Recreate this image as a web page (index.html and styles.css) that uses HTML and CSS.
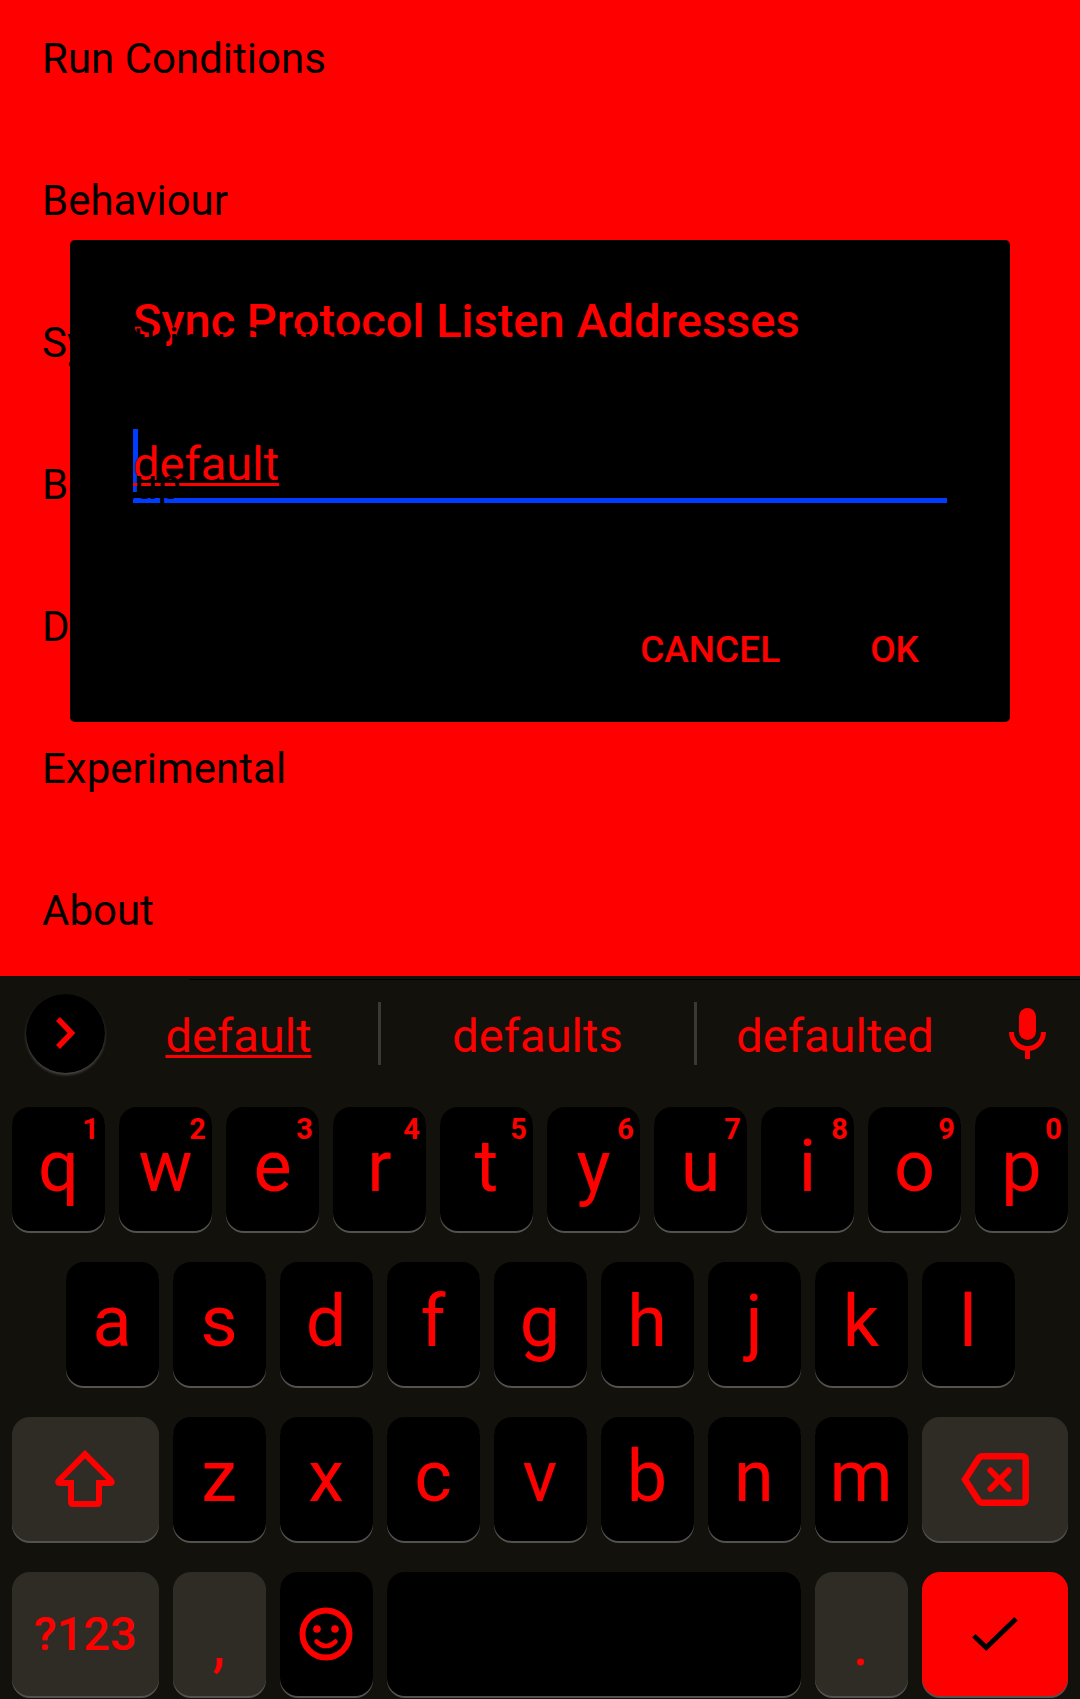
FILE: index.html
```html
<!DOCTYPE html>
<html lang="en">
<head>
<meta charset="utf-8">
<meta name="viewport" content="width=device-width, initial-scale=1">
<title>Settings</title>
<link rel="stylesheet" href="styles.css">
</head>
<body>
<main class="settings">
  <ul class="settings-list">
    <li>Run Conditions</li>
    <li>Behaviour</li>
    <li>Syncthing Options</li>
    <li>Backup</li>
    <li>Debug</li>
    <li>Experimental</li>
    <li>About</li>
  </ul>
  <form class="dialog" role="dialog" aria-labelledby="dialog-title">
    <label class="dialog-title" id="dialog-title" for="addresses">Sync Protocol Listen Addresses</label>
    <div class="field">
      <input class="field-input" id="addresses" type="text" value="default" spellcheck="false">
      <span class="caret"></span>
    </div>
    <div class="dialog-actions">
      <button class="action" type="button">CANCEL</button>
      <button class="action" type="button">OK</button>
    </div>
  </form>
</main>

<section class="keyboard" aria-label="Keyboard">
  <div class="suggestions">
    <button class="expand" type="button" aria-label="More">
      <svg width="20" height="32" viewBox="0 0 20 32"><path d="M2 2 15.5 16 2 30" fill="none" stroke="currentColor" stroke-width="5.5"/></svg>
    </button>
    <button class="word word-current" type="button"><span>default</span></button>
    <button class="word" type="button">defaults</button>
    <button class="word word-last" type="button">defaulted</button>
    <button class="mic" type="button" aria-label="Voice input">
      <svg width="37" height="51" viewBox="0 0 37 51"><rect x="10" y="0" width="17" height="32" rx="8.5" fill="currentColor"/><path d="M2.5 24a16 16.500 0 0 0 32 0M18.500 40v11" fill="none" stroke="currentColor" stroke-width="5"/></svg>
    </button>
  </div>
  <div class="keys">
    <button class="key" type="button">q<span class="hint">1</span></button>
    <button class="key" type="button">w<span class="hint">2</span></button>
    <button class="key" type="button">e<span class="hint">3</span></button>
    <button class="key" type="button">r<span class="hint">4</span></button>
    <button class="key" type="button">t<span class="hint">5</span></button>
    <button class="key" type="button">y<span class="hint">6</span></button>
    <button class="key" type="button">u<span class="hint">7</span></button>
    <button class="key" type="button">i<span class="hint">8</span></button>
    <button class="key" type="button">o<span class="hint">9</span></button>
    <button class="key" type="button">p<span class="hint">0</span></button>

    <button class="key key-indent" type="button">a</button>
    <button class="key" type="button">s</button>
    <button class="key" type="button">d</button>
    <button class="key" type="button">f</button>
    <button class="key" type="button">g</button>
    <button class="key" type="button">h</button>
    <button class="key" type="button">j</button>
    <button class="key" type="button">k</button>
    <button class="key" type="button">l</button>

    <button class="key key-wide key-muted key-first key-icon" type="button" aria-label="Shift">
      <svg width="60" height="58" viewBox="0 0 60 58" fill="none" stroke="currentColor" stroke-width="6"><path d="M30 4.200 4 30.500Q2 33 5 33H16V52Q16 54 18 54H42Q44 54 44 52V33H55Q58 33 56 30.500Z"/></svg>
    </button>
    <button class="key" type="button">z</button>
    <button class="key" type="button">x</button>
    <button class="key" type="button">c</button>
    <button class="key" type="button">v</button>
    <button class="key" type="button">b</button>
    <button class="key" type="button">n</button>
    <button class="key" type="button">m</button>
    <button class="key key-wide key-muted key-icon" type="button" aria-label="Backspace">
      <svg width="68" height="53" viewBox="0 0 68 53" fill="none" stroke="currentColor" stroke-width="6.500"><path d="M4 26.500 17.500 5.500Q19 3.250 21.500 3.250H61Q64.700 3.250 64.700 7V46Q64.700 49.750 61 49.750H21.500Q19 49.750 17.500 47.500Z"/><path d="M29.500 17.500 47.500 35.800M47.500 17.500 29.500 35.800" stroke-width="6" stroke-linecap="round"/></svg>
    </button>

    <button class="key key-wide key-muted key-icon key-symbols" type="button">?123</button>
    <button class="key key-muted key-mark" type="button">,</button>
    <button class="key key-icon" type="button" aria-label="Emoji">
      <svg width="54" height="54" viewBox="0 0 54 54" fill="none" stroke="currentColor"><circle cx="27" cy="27" r="23.500" stroke-width="6"/><circle cx="18" cy="22" r="3.800" fill="currentColor" stroke="none"/><circle cx="36" cy="22" r="3.800" fill="currentColor" stroke="none"/><path d="M17.500 34.500Q27 43.500 36.500 34.500" stroke-width="4.500" stroke-linecap="round"/></svg>
    </button>
    <button class="key key-space" type="button" aria-label="Space"></button>
    <button class="key key-muted key-mark" type="button">.</button>
    <button class="key key-wide key-icon key-enter" type="button" aria-label="Done">
      <svg width="46" height="34" viewBox="0 0 46 34"><path d="M1.800 18.700 14.300 30.500 44 1.800" fill="none" stroke="currentColor" stroke-width="5"/></svg>
    </button>
  </div>
</section>
</body>
</html>
```
FILE: styles.css
```css
* {
  box-sizing: border-box;
}

body {
  margin: 0;
  min-height: 100vh;
  display: flex;
  flex-direction: column;
  background: #f00;
  color: #f00;
  font-family: Roboto, "Liberation Sans", sans-serif;
}

button,
input {
  margin: 0;
  padding: 0;
  border: 0;
  background: none;
  color: inherit;
  font: inherit;
}

svg {
  display: block;
}

/* Settings screen */

.settings {
  position: relative;
  flex: 1;
}

/* The category labels are painted above the dialog */
.settings-list {
  position: relative;
  z-index: 2;
  pointer-events: none;
  display: flex;
  flex-direction: column;
  gap: 92px;
  margin: 0;
  padding: 34px 42px 40px;
  list-style: none;
  color: #000;
  font-size: 42px;
  line-height: 50px;
}

.dialog {
  position: absolute;
  z-index: 1;
  top: 240px;
  left: 70px;
  right: 70px;
  padding: 53px 63px 50px;
  border-radius: 5px;
  background: #000;
}

.dialog-title {
  display: block;
  margin-bottom: 86px;
  font-size: 47px;
  font-weight: 500;
  line-height: 56px;
}

.field {
  position: relative;
}

.field-input {
  display: block;
  width: 100%;
  height: 68px;
  padding-bottom: 7px;
  border-bottom: 5px solid #003cff;
  outline: 0;
  font-size: 47px;
  line-height: 56px;
  text-decoration: underline 3px;
  text-underline-offset: 3px;
  text-decoration-skip-ink: none;
}

.caret {
  position: absolute;
  z-index: -1;
  top: -6px;
  left: 0;
  width: 5px;
  height: 63px;
  background: #003cff;
}

.dialog-actions {
  display: flex;
  justify-content: flex-end;
  gap: 90px;
  padding: 125px 28px 0 0;
}

.action {
  font-size: 37px;
  font-weight: 500;
  line-height: 44px;
}

/* Keyboard */

.keyboard {
  position: relative;
  padding: 17px 12px 3px;
  background: #12110c;
}

.keyboard::before {
  content: "";
  position: absolute;
  top: 3px;
  left: 189px;
  right: 0;
  height: 1px;
  background: #000;
}

.suggestions {
  display: grid;
  grid-template-columns: 93px 276fr 316fr 276fr 95px;
  align-items: center;
  height: 80px;
  margin-bottom: 34px;
}

.expand {
  display: grid;
  place-items: center;
  width: 79px;
  height: 79px;
  margin-left: 14px;
  border-radius: 50%;
  background: #000;
  box-shadow: 0 2px 3px #4a4946;
}

.word {
  height: 63px;
  border-right: 3px solid #3a3936;
  font-size: 47px;
  line-height: 56px;
  padding-top: 6px;
}

.word-current {
  padding-right: 6px;
  text-decoration: underline 3px;
  text-underline-offset: 3px;
}

.word-last {
  border-right: 0;
}

.mic {
  justify-self: center;
  padding-left: 14px;
}

.keys {
  display: grid;
  grid-template-columns: repeat(20, minmax(0, 1fr));
  grid-auto-rows: 124px;
  gap: 31px 14px;
}

.key {
  position: relative;
  grid-column: span 2;
  display: flex;
  align-items: center;
  justify-content: center;
  padding-bottom: 5px;
  border-radius: 18px;
  background: #000;
  box-shadow: 0 2px 0 #54524f;
  font-size: 72px;
  line-height: 84px;
}

.key-icon {
  padding-bottom: 0;
}

.key-indent {
  grid-column: 2 / span 2;
}

.key-wide {
  grid-column: span 3;
}

.key-first {
  grid-column: 1 / span 3;
}

.key-space {
  grid-column: span 8;
}

.key-muted {
  background: #2f2c26;
}

.key-enter {
  background: #f00;
  color: #000;
}

.key-symbols {
  font-size: 47px;
  font-weight: 500;
}

.key-mark {
  padding: 19px 0 0;
  font-size: 64px;
}

.hint {
  position: absolute;
  top: 5px;
  right: 6px;
  font-size: 29px;
  font-weight: 700;
  line-height: 34px;
}
```
